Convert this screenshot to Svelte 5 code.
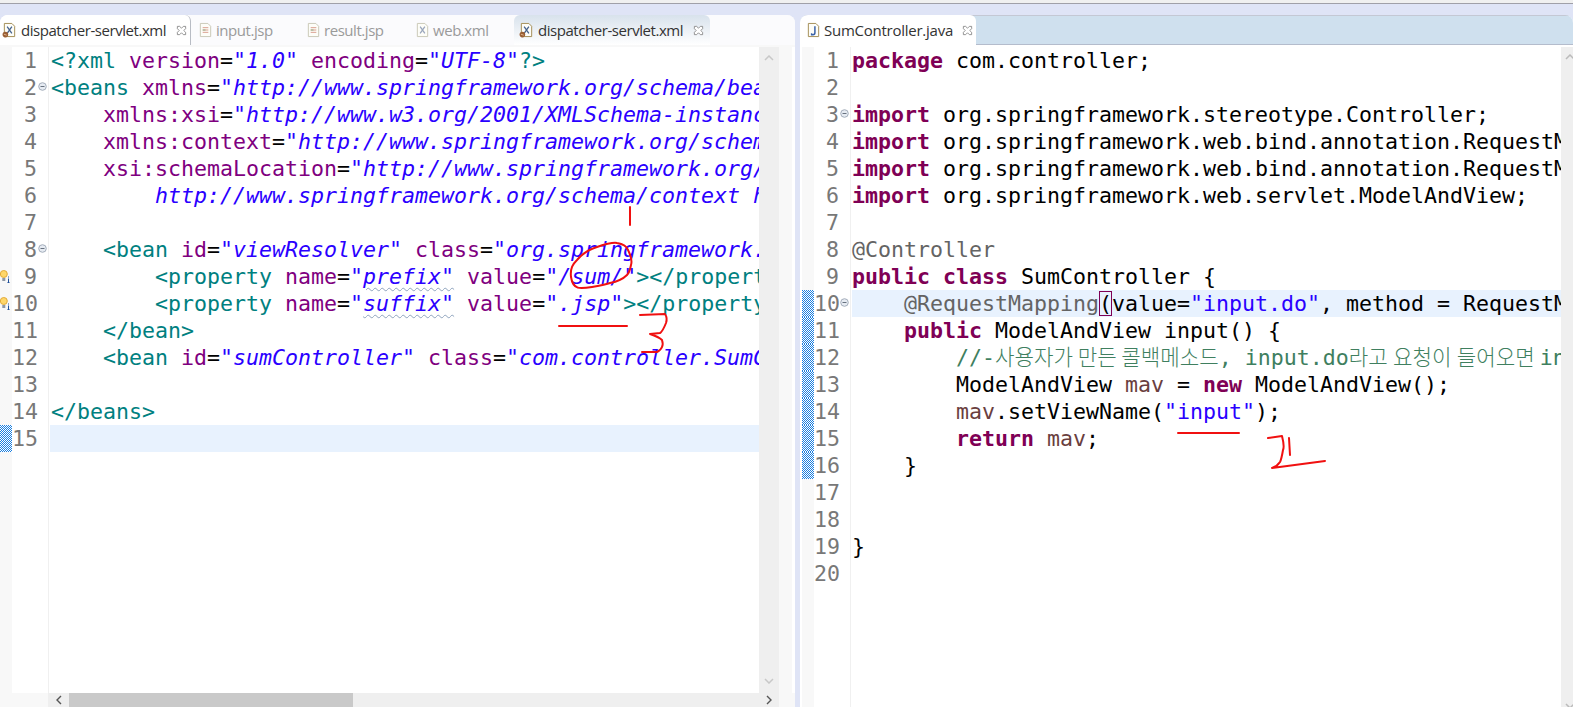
<script>
  const xmlTabs = [
    { name: "dispatcher-servlet.xml", icon: "xmlbean", kind: "first", close: true },
    { name: "input.jsp", icon: "jsp", kind: "dim input" },
    { name: "result.jsp", icon: "jsp", kind: "dim result" },
    { name: "web.xml", icon: "xml", kind: "dim web" },
    { name: "dispatcher-servlet.xml", icon: "xmlbean", kind: "active", close: true },
  ];

  const I = "    ";
  const xmlLines = [
    [["t", '<?xml '], ["a", "version"], ["k", "="], ["s", '"1.0" '], ["a", "encoding"], ["k", "="], ["s", '"UTF-8"'], ["t", "?>"]],
    [["t", "<beans "], ["a", "xmlns"], ["k", "="], ["s", '"http://www.springframework.org/schema/beans"']],
    [["k", I], ["a", "xmlns:xsi"], ["k", "="], ["s", '"http://www.w3.org/2001/XMLSchema-instance"']],
    [["k", I], ["a", "xmlns:context"], ["k", "="], ["s", '"http://www.springframework.org/schema/context"']],
    [["k", I], ["a", "xsi:schemaLocation"], ["k", "="], ["s", '"http://www.springframework.org/schema/beans']],
    [["k", I + I], ["s", "http://www.springframework.org/schema/context http://www.springframework.org/schema/context"]],
    [],
    [["k", I], ["t", "<bean "], ["a", "id"], ["k", "="], ["s", '"viewResolver" '], ["a", "class"], ["k", "="], ["s", '"org.springframework.web.servlet.view"']],
    [["k", I + I], ["t", "<property "], ["a", "name"], ["k", "="], ["s", '"'], ["s wave", 'prefix"'], ["k", " "], ["a", "value"], ["k", "="], ["s", '"/sum/"'], ["t", "></property>"]],
    [["k", I + I], ["t", "<property "], ["a", "name"], ["k", "="], ["s", '"'], ["s wave", 'suffix"'], ["k", " "], ["a", "value"], ["k", "="], ["s", '".jsp"'], ["t", "></property>"]],
    [["k", I], ["t", "</bean>"]],
    [["k", I], ["t", "<bean "], ["a", "id"], ["k", "="], ["s", '"sumController" '], ["a", "class"], ["k", "="], ["s", '"com.controller.SumController"']],
    [],
    [["t", "</beans>"]],
    [],
  ];

  const javaLines = [
    [["b", "package"], ["k", " com.controller;"]],
    [],
    [["b", "import"], ["k", " org.springframework.stereotype.Controller;"]],
    [["b", "import"], ["k", " org.springframework.web.bind.annotation.RequestMapping;"]],
    [["b", "import"], ["k", " org.springframework.web.bind.annotation.RequestMethod;"]],
    [["b", "import"], ["k", " org.springframework.web.servlet.ModelAndView;"]],
    [],
    [["n", "@Controller"]],
    [["b", "public class"], ["k", " SumController {"]],
    [["k", I], ["n", "@RequestMapping"], ["k match", "("], ["k", "value="], ["j", '"input.do"'], ["k", ", method = RequestMethod.GET)"]],
    [["k", I], ["b", "public"], ["k", " ModelAndView input() {"]],
    [["k", I + I], ["c", "//-"], ["c ko", "사용자가 만든 콜백메소드"], ["c", ", input.do"], ["c ko wide", "라고 요청이 들어오면 "], ["c", "input"]],
    [["k", I + I + "ModelAndView "], ["v", "mav"], ["k", " = "], ["b", "new"], ["k", " ModelAndView();"]],
    [["k", I + I], ["v", "mav"], ["k", ".setViewName("], ["j", '"input"'], ["k", ");"]],
    [["k", I + I], ["b", "return"], ["k", " "], ["v", "mav"], ["k", ";"]],
    [["k", I + "}"]],
    [],
    [],
    [["k", "}"]],
    [],
  ];

  const xmlFolds = [2, 8];
  const javaFolds = [3, 10];
  const hints = [9, 10];
</script>

{#snippet fileIcon(kind)}
  <svg class="file-icon" viewBox="0 0 16 17" aria-hidden="true">
    <path d="M2.5 1.5h8l3 3v11h-11z" fill="#fdfdf8" stroke={kind === "jsp" || kind === "xml" ? "#c8c6b4" : "#a08a50"} />
    {#if kind === "jsp"}
      <path d="M5 6h6M5 8.5h6M5 11h6" stroke="#d89a8a" />
      <path d="M5 8.5h3" stroke="#88b088" />
    {:else if kind === "java"}
      <path d="M9.5 4.5v7q0 2-2 2h-1.5v-1.5" fill="none" stroke="#3a62a8" stroke-width="1.6" />
    {:else}
      <path d="M5.5 5l5 7M10.5 5l-5 7" stroke={kind === "xml" ? "#9aa6bc" : "#44628c"} stroke-width="1.4" />
      {#if kind === "xmlbean"}
        <circle cx="3.6" cy="13.4" r="3" fill="#9a5f34" />
        <path d="M2 13l3 1" stroke="#e0b890" />
      {/if}
    {/if}
  </svg>
{/snippet}

{#snippet closeIcon()}
  <svg class="close-icon" viewBox="0 0 12 12" aria-hidden="true">
    <path d="M1.5 1.5h2.5l2 2 2-2h2.5v2.5l-2 2 2 2v2.5h-2.5l-2-2-2 2h-2.5v-2.5l2-2-2-2z" fill="#fff" stroke="#8a8a8a" />
  </svg>
{/snippet}

{#snippet foldIcon()}
  <svg class="fold" viewBox="0 0 9 9" aria-hidden="true">
    <circle cx="4.5" cy="4.5" r="3.8" fill="#e6ebf2" stroke="#a3adbb" />
    <path d="M2.5 4.5h4" stroke="#67717f" />
  </svg>
{/snippet}

{#snippet bulb()}
  <svg class="bulb" viewBox="0 0 11 13" aria-hidden="true">
    <circle cx="3.8" cy="4" r="3.5" fill="#ffd76a" stroke="#e2ab3a" />
    <rect x="2.3" y="8" width="3" height="3" fill="#8d97a6" />
    <path d="M8.5 6.5v1M8.5 8.5v4M7.5 12.5h2" stroke="#1e4f9a" fill="none" />
  </svg>
{/snippet}

{#snippet code(lines)}
  {#each lines as tokens, idx}
    <div class="line" class:cur={lines === xmlLines ? idx === 14 : idx === 9}>{#each tokens as tok}<span class={tok[0]}>{tok[1]}</span>{/each}</div>
  {/each}
{/snippet}

<div class="app">
  <div class="top"></div>
  <div class="panels">
    <section class="panel left">
      <div class="tabs">
        {#each xmlTabs as tab}
          <div class="tab {tab.kind}">
            {@render fileIcon(tab.icon)}
            <span class="label">{tab.name}</span>
            {#if tab.close}{@render closeIcon()}{/if}
          </div>
        {/each}
      </div>
      <div class="body">
        <div class="ruler">
          {#each xmlLines as _, i}
            <div class="mark" class:changed={i === 14}>{#if hints.includes(i + 1)}{@render bulb()}{/if}</div>
          {/each}
        </div>
        <div class="gutter">
          {#each xmlLines as _, i}
            <div class="num"><span>{i + 1}</span>{#if xmlFolds.includes(i + 1)}{@render foldIcon()}{/if}</div>
          {/each}
        </div>
        <div class="code xml">{@render code(xmlLines)}</div>
        <div class="vbar">
          <svg viewBox="0 0 10 6" aria-hidden="true"><path d="M1 5l4-4 4 4" fill="none" stroke="#c8c8c8" stroke-width="1.5" /></svg>
          <svg viewBox="0 0 10 6" aria-hidden="true"><path d="M1 1l4 4 4-4" fill="none" stroke="#c8c8c8" stroke-width="1.5" /></svg>
        </div>
        <div class="overview"></div>
      </div>
      <div class="hbar">
        <div class="harrow"><svg viewBox="0 0 6 10" aria-hidden="true"><path d="M5 1l-4 4 4 4" fill="none" stroke="#555" stroke-width="1.4" /></svg></div>
        <div class="thumb"></div>
        <div class="harrow end"><svg viewBox="0 0 6 10" aria-hidden="true"><path d="M1 1l4 4-4 4" fill="none" stroke="#555" stroke-width="1.4" /></svg></div>
      </div>
    </section>

    <section class="panel right">
      <div class="tabs java-tabs">
        <div class="tab java">
          {@render fileIcon("java")}
          <span class="label">SumController.java</span>
          {@render closeIcon()}
        </div>
      </div>
      <div class="body">
        <div class="ruler">
          {#each javaLines as _, i}
            <div class="mark" class:changed={i >= 9 && i <= 15}></div>
          {/each}
        </div>
        <div class="gutter">
          {#each javaLines as _, i}
            <div class="num"><span>{i + 1}</span>{#if javaFolds.includes(i + 1)}{@render foldIcon()}{/if}</div>
          {/each}
        </div>
        <div class="code">{@render code(javaLines)}</div>
        <div class="vbar thin">
          <svg viewBox="0 0 10 6" aria-hidden="true"><path d="M1 5l4-4 4 4" fill="none" stroke="#bbb" stroke-width="1.5" /></svg>
          <svg viewBox="0 0 10 6" aria-hidden="true"><path d="M1 1l4 4 4-4" fill="none" stroke="#bbb" stroke-width="1.5" /></svg>
        </div>
      </div>
    </section>
  </div>

  <svg class="ink" viewBox="0 0 1573 707" aria-hidden="true">
    <g fill="none" stroke="#f01010" stroke-width="2" stroke-linecap="round" stroke-linejoin="round">
      <path d="M630 207v18" />
      <path d="M592 287C580 289 573 290 571 277C570 268 573 264 577 260C583 253 590 249 597 247C606 244 612 242 617 243C623 244 627 247 628 250C631 256 632 262 631 265C630 270 629 273 627 275C622 280 615 282 610 283C604 285 598 286 592 287" />
      <path d="M559 326h68" />
      <path d="M640 315L665 314C667 317 667 320 666 323C664 328 662 332 660 333L650 334C656 336 660 338 662 340C663 343 663 345 662 347C661 350 659 351 657 352L642 352" />
      <path d="M1178 433h61" />
      <path d="M1268 438L1282 436C1284 444 1284 448 1283 450C1282 456 1281 460 1280 462C1278 465 1275 467 1272 468L1325 461" />
      <path d="M1289 438L1290 455" />
    </g>
  </svg>
</div>

<style>
  :global(body) {
    margin: 0;
    overflow: hidden;
  }

  .app {
    position: relative;
    width: 1573px;
    height: 707px;
    display: flex;
    flex-direction: column;
    background: #dfe4f6;
    overflow: hidden;
  }

  .top {
    height: 12px;
    flex: none;
    border-top: 3px solid #f0f0f0;
    box-shadow: inset 0 1px 0 #a0a0a8;
  }

  .panels {
    flex: 1;
    display: flex;
    min-height: 0;
  }

  .panel {
    display: flex;
    flex-direction: column;
    border-radius: 8px 8px 0 0;
    overflow: hidden;
  }

  .left {
    width: 795px;
    margin-right: 5px;
    background: #f8f8f8;
  }

  .right {
    flex: 1;
    min-width: 0;
    background: #fff;
  }

  .tabs {
    height: 30px;
    flex: none;
    display: flex;
    background: #fbfbfd;
    margin-bottom: 2px;
    font: 15px "Open Sans", sans-serif;
    letter-spacing: -0.45px;
    color: #333;
  }

  .java-tabs {
    background: #cfe0ee;
    margin-bottom: 0;
    border-bottom: 2px solid #fff;
    box-shadow: inset 0 1px 0 #c4c8d4, inset 0 -1px 0 #b4bccc;
    letter-spacing: -0.25px;
  }

  .tab {
    display: flex;
    align-items: center;
    box-sizing: border-box;
    gap: 4px;
    white-space: nowrap;
  }

  .tab.first {
    width: 191px;
    padding-left: 2px;
    background: #fff;
    border-right: 1px solid #b8bcc4;
    border-radius: 6px 6px 0 0;
  }

  .tab.dim {
    color: #9a9a9a;
    gap: 3px;
    padding-left: 7px;
  }

  .tab.input {
    width: 108px;
  }

  .tab.result {
    width: 109px;
  }

  .tab.web {
    width: 106px;
  }

  .tab.active {
    width: 196px;
    padding-left: 5px;
    background: linear-gradient(#d8e2ec, #fff);
    border-radius: 6px 6px 0 0;
  }

  .tab.java {
    width: 176px;
    padding-left: 6px;
    gap: 3px;
    background: #fff;
    border-radius: 6px 6px 0 0;
  }

  .file-icon {
    width: 15px;
    height: 16px;
    flex: none;
  }

  .close-icon {
    width: 11px;
    height: 11px;
    flex: none;
    margin-left: 6px;
  }

  .body {
    flex: 1;
    min-height: 0;
    display: flex;
  }

  .right .body {
    padding-left: 2px;
  }

  .ruler {
    width: 12px;
    flex: none;
    background: #f8f8f8;
  }

  .mark {
    height: 27px;
    display: flex;
    align-items: center;
  }

  .mark.changed {
    background: #fff url("data:image/svg+xml,%3Csvg xmlns='http://www.w3.org/2000/svg' width='2' height='2' shape-rendering='crispEdges'%3E%3Crect width='1' height='1' fill='%231a7fe0'/%3E%3Crect x='1' y='1' width='1' height='1' fill='%231a7fe0'/%3E%3C/svg%3E") 0 0 / 2px 2px;
  }

  .bulb {
    width: 11px;
    height: 13px;
  }

  .gutter {
    width: 36px;
    flex: none;
    background: #fff;
    border-right: 1px solid #f0f0f0;
    font: 21.6px/27px "DejaVu Sans Mono", monospace;
    color: #787878;
  }

  .num {
    height: 27px;
    display: flex;
    align-items: center;
  }

  .num span {
    width: 25px;
    flex: none;
    text-align: right;
  }

  .fold {
    width: 9px;
    height: 9px;
    flex: none;
    margin-left: 1px;
    margin-top: -2px;
  }

  .code {
    flex: 1;
    min-width: 0;
    background: #fff;
    overflow: hidden;
    padding-left: 1px;
    font: 21.6px/27px "DejaVu Sans Mono", "Noto Sans CJK KR", monospace;
    white-space: pre;
    color: #000;
  }

  .line {
    height: 27px;
    padding-left: 1px;
  }

  .right .line {
    padding-left: 0;
  }

  .line.cur {
    background: #e8f2fe;
  }

  .t { color: #008080; }
  .a { color: #7f007f; }
  .s { color: #2a00ff; font-style: italic; }
  .j { color: #2a00ff; }
  .b { color: #7f0055; font-weight: bold; }
  .n { color: #646464; }
  .v { color: #6a3e3e; }
  .c { color: #3f7f5f; }
  .ko { font-family: "Noto Sans CJK KR", sans-serif; font-size: 21.2px; font-weight: 300; line-height: 1; }
  .wide { word-spacing: 0.5px; }

  .wave {
    text-decoration: underline wavy #8fa3bd 1px;
    text-underline-offset: 3px;
  }

  .match {
    outline: 1px solid #7f0055;
    outline-offset: -1px;
  }

  .vbar {
    width: 20px;
    flex: none;
    background: #efefef;
    display: flex;
    flex-direction: column;
    justify-content: space-between;
    align-items: center;
    padding: 8px 0 9px;
    box-sizing: border-box;
  }

  .vbar svg {
    width: 10px;
    height: 6px;
    flex: none;
  }

  .vbar.thin {
    width: 12px;
    padding: 7px 0 0;
    align-items: flex-start;
  }

  .vbar.thin svg {
    margin-left: 4px;
    margin-bottom: -2px;
  }

  .overview {
    width: 13px;
    flex: none;
    border-right: 3px solid #fff;
  }

  .hbar {
    height: 14px;
    flex: none;
    margin-left: 48px;
    width: 731px;
    background: #efefef;
    display: flex;
    align-items: center;
  }

  .harrow {
    width: 21px;
    flex: none;
    display: flex;
    justify-content: center;
  }

  .harrow svg {
    width: 6px;
    height: 10px;
  }

  .harrow.end {
    margin-left: auto;
  }

  .thumb {
    width: 284px;
    height: 14px;
    background: #c9c9c9;
  }

  .ink {
    position: absolute;
    inset: 0;
    width: 1573px;
    height: 707px;
    pointer-events: none;
  }
</style>
